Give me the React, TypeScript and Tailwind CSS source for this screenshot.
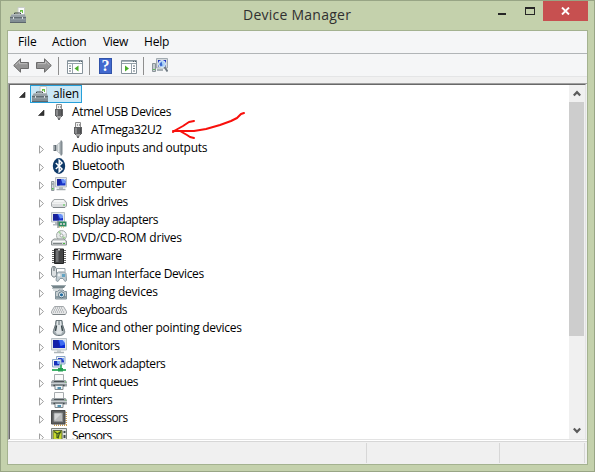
import type { ReactNode } from "react";

function Svg({ children, w = 16, h = 16 }: { children: ReactNode; w?: number; h?: number }) {
  return (
    <svg width={w} height={h} viewBox={`0 0 ${w} ${h}`} className="block shrink-0" fill="none">
      {children}
    </svg>
  );
}

const Toolbox = () => (
  <Svg>
    <path d="M8 7.500v-7h6.500v7z" fill="#fbfcfb" stroke="#c9cdca" />
    <path d="M10 5V3h3v3h-1V4.500h-1V5z" fill="#6abf45" />
    <path d="M4.500 7.500V6h6v1.500" stroke="#3d4448" />
    <path d="M2 7h12.500L16 10H0z" fill="#98a2a7" />
    <path d="M2 7.500h12" stroke="#b2babe" />
    <path d="M0 10h16v5.500H0z" fill="#828e94" />
    <path d="M0 10.500h16" stroke="#626d72" />
    <path d="M0 15.500h16" stroke="#5c666c" />
    <path d="M1 12h14v1H1z" fill="#909ba0" />
    <path d="M3 10h1v2H3zM12 10h1v2h-1z" fill="#d9dddf" />
  </Svg>
);

const Usb = () => (
  <Svg>
    <path d="M5.500.500h5V6h-5z" fill="#f1f1f1" stroke="#8e8e8e" />
    <path d="M7 2h1v2H7zM9 2h1v2H9z" fill="#a2a2a2" />
    <path d="M4 5h8v7h-1v1H5v-1H4z" fill="#5f6062" />
    <path d="M5 6h2v5.500H5z" fill="#8a8b8d" />
    <path d="M10 6h1v5h-1z" fill="#4b4c4e" />
    <path d="M6 12h4v2L9 15H7l-1-1z" fill="#a5a5a5" />
    <path d="M7 14h2v2H7z" fill="#6f7072" />
  </Svg>
);

const Speaker = () => (
  <Svg>
    <path d="M2.500 5h3v6h-3z" fill="#5f6970" />
    <path d="M3 5.500h1V10H3z" fill="#9ba4a9" />
    <path d="M5.500 5L10 1v14l-4.500-4z" fill="#b3babe" />
    <path d="M7.500 4v8" stroke="#e0e4e5" strokeWidth="1.500" />
    <path d="M9.500 .500H11v15H9.500z" fill="#848d93" />
    <path d="M11.500 1.500v13" stroke="#bdc3c6" />
  </Svg>
);

const Bluetooth = () => (
  <Svg>
    <ellipse cx="8" cy="8" rx="6.200" ry="7.900" fill="#0f3a69" />
    <path d="M4.800 5l6.200 6-2.800 2.700V2.300L11 5l-6.200 6" stroke="#fff" strokeWidth="1.500" />
  </Svg>
);

const Computer = () => (
  <Svg>
    <path d="M.500 5.500h2.500v9H.500z" fill="#d4d9dc" stroke="#929b9f" />
    <path d="M1 8h1.500" stroke="#78858b" />
    <path d="M1 12h1.500v1.500H1z" fill="#50c04b" />
    <path d="M4.500 1.500h11v9.500h-11z" fill="#e5e8e9" stroke="#b7bec2" />
    <path d="M6 3h8.500v6.500H6z" fill="#1834c8" />
    <path d="M6 3h4L8.500 9.500H6z" fill="#17219a" />
    <path d="M10 3h4.500v4l-3 .5z" fill="#6b92f5" />
    <path d="M12.500 3h2v2z" fill="#c3d9ff" />
    <path d="M8 11h4v2H8z" fill="#b7bec2" />
    <path d="M5.500 13.500h9" stroke="#a2aaae" strokeWidth="1.500" />
  </Svg>
);

const Disk = () => (
  <Svg>
    <path d="M3 5.500h10l2.500 3V12l-1.500 1.500H2L.500 12V8.500z" fill="#dadcdd" stroke="#a1a5a7" />
    <path d="M2 8.500L3.500 6h9L14 8.500z" fill="#f5f6f6" />
    <path d="M1 9.500h14" stroke="#f0f1f1" />
    <path d="M2 13.500h12" stroke="#83898b" />
    <path d="M12 10.500h2v1h-2z" fill="#49c346" />
  </Svg>
);

const Display = () => (
  <Svg>
    <path d="M.500.500h13v9.500H.500z" fill="#e5e8ea" stroke="#b7bfc3" />
    <path d="M2 2h10v6.500H2z" fill="#1834c8" />
    <path d="M2 2h4l2 6.500H2z" fill="#17219a" />
    <path d="M7 2h5v4l-3 .5z" fill="#6b92f5" />
    <path d="M10 2h2v2z" fill="#c3d9ff" />
    <path d="M4 10h4v2H4zM2 12h6v1.500H2z" fill="#b4bbc0" />
    <path d="M7.500 9.500h8v5h-8z" fill="#2e8b62" />
    <path d="M9 11h2v2H9zM12 11h2v2h-2z" fill="#bac7c0" />
    <path d="M7 9v7" stroke="#606e68" />
    <path d="M8 15h6" stroke="#bea746" strokeDasharray="1 1" />
  </Svg>
);

const Dvd = () => (
  <Svg>
    <circle cx="10.500" cy="5.500" r="5" fill="#e4e8e6" stroke="#a5adaa" />
    <path d="M10.500 5.500L7 2l2-1zM10.500 5.500l4 2-2 2z" fill="#a0d396" />
    <path d="M10.500 5.500l2-4 2 2z" fill="#f5f5ff" />
    <circle cx="10.500" cy="5.500" r="1.500" fill="#fff" stroke="#9ea7a3" />
    <path d="M3 9h10l2.500 2v4H.500v-4z" fill="#d5d8d9" stroke="#8c9293" />
    <path d="M2 11.500h12" stroke="#fafafa" />
    <path d="M2 13.500h9" stroke="#7d8485" />
    <path d="M12 13.500h2" stroke="#47ba3c" />
  </Svg>
);

const Chip = () => (
  <Svg>
    <path d="M1 2.500h14M1 4.500h14M1 6.500h14M1 8.500h14M1 10.500h14M1 12.500h14M1 14.500h14" stroke="#666" />
    <path d="M3.500 1h9v14.500h-9z" fill="#444546" stroke="#242526" />
    <path d="M5 2h2.500v12H5z" fill="#707274" />
    <path d="M7 1h2v1.500H7z" fill="#ccc" />
  </Svg>
);

const Hid = () => (
  <Svg>
    <path d="M1.500.500h2.500L5.500 3v6L4 11H2L.500 9V3z" fill="#dce0e2" stroke="#7d878c" />
    <path d="M3 1v4" stroke="#58646a" />
    <path d="M5 2.500h9v4" stroke="#9ba5aa" />
    <path d="M6 7l1.500-1h6L15 7.500l.5 7-1.500 1-2-3H9l-2 3-2-1z" fill="#c0cbd1" stroke="#8a989f" />
    <path d="M6.500 9h3M8 7.500v3" stroke="#fff" />
    <path d="M11 8h3v3h-3z" fill="#63a4c3" />
  </Svg>
);

const Camera = () => (
  <Svg>
    <path d="M0 1h15l-2 3H2z" fill="#74848a" />
    <path d="M0 1.500h14" stroke="#9eabb0" />
    <path d="M1 4.500h11M2 6h7" stroke="#b7c0c3" />
    <path d="M4.500 7.500h2L8 6h4l1.500 1.500h2V15h-11z" fill="#c7cfd2" stroke="#82929a" />
    <path d="M5 12h10v2.500H5z" fill="#8b9ba2" />
    <circle cx="10.500" cy="10.800" r="3" fill="#f1f5f7" stroke="#57707d" />
    <circle cx="10.500" cy="10.800" r="1.600" fill="#226b9f" />
  </Svg>
);

const Keyboard = () => (
  <Svg>
    <path d="M3.500 4.500h9l3 5v1.500L14 12.500H2L.500 11V9.500z" fill="#e5e6e7" stroke="#a2a7aa" />
    <path d="M4 6h8M3 8h10M2 10h12" stroke="#93999c" strokeDasharray="1 1" />
    <path d="M1.500 12.500h13" stroke="#7b8285" />
  </Svg>
);

const Mouse = () => (
  <Svg>
    <path d="M5 .500h6l.5 4 2 6c1 3-1.500 5-5.500 5s-6.500-2-5.500-5l2-6z" fill="#a3adb1" stroke="#69757a" />
    <path d="M6 1h4l.5 4 1.500 6-2 3H6l-2-3 1.500-6z" fill="#dfe4e6" />
    <path d="M5.500 5.500L4.500 11M10.500 5.500l1 5.500" stroke="#39454a" strokeWidth="1.400" />
    <path d="M8 1v4" stroke="#606e74" />
    <path d="M5.500 14h5" stroke="#d4dadd" />
  </Svg>
);

const Monitor = () => (
  <Svg>
    <path d="M.500.500h15v11.500H.500z" fill="#e3e7e9" stroke="#b9c1c5" />
    <path d="M2 2h12v8H2z" fill="#0a2ad6" />
    <path d="M2 2h5l2 8H2z" fill="#1420a8" />
    <path d="M8 2h6v4.500L9.500 8z" fill="#3e6bf0" />
    <path d="M11.500 2H14v3z" fill="#bdd4ff" />
    <path d="M6 12h4v2H6z" fill="#c8ced1" />
    <path d="M3 14.500h10" stroke="#acb4b8" strokeWidth="1.500" />
  </Svg>
);

const Network = () => (
  <Svg>
    <path d="M5.500.500h8.500v7.500H5.500z" fill="#eef2f4" stroke="#8ba6c8" />
    <path d="M7 2h6v4.500H7z" fill="#253bc5" />
    <path d="M10.500 2H13v3z" fill="#7da5f5" />
    <path d="M1.500 3.500H10V11H1.500z" fill="#eef2f4" stroke="#8ba6c8" />
    <path d="M3 5h5.500v4.500H3z" fill="#1530ba" />
    <path d="M6 5h2.500v3L6.500 8z" fill="#6fa7fa" />
    <path d="M10 8.500v4M1 14h14" stroke="#42b36b" strokeWidth="1.800" />
    <path d="M7 12h5v3.500H7z" fill="#259e52" />
  </Svg>
);

const Printer = () => (
  <Svg>
    <path d="M3.500.500h9v7h-9z" fill="#fafafa" stroke="#a7acaf" />
    <path d="M1.500 6h13L16 8v4.500H0V8z" fill="#9ba2a6" />
    <path d="M3 7.500h10" stroke="#4b5255" />
    <path d="M0 9.500h16" stroke="#ccd1d3" />
    <path d="M2.500 11.500h11" stroke="#333b3e" strokeWidth="1.500" />
    <path d="M4 11.500h8v4H4z" fill="#edf3f6" stroke="#81898d" />
    <path d="M6.500 13h3.500v2H6.500z" fill="#5292b0" />
    <path d="M14 8h1" stroke="#6fd36a" />
  </Svg>
);

const Processor = () => (
  <Svg>
    <path d="M3 15.200h13M15.200 2v13" stroke="#c99b4a" strokeWidth="1.500" strokeDasharray="1 1" />
    <path d="M.500.500h13.500V14H.500z" fill="#5c5e5f" stroke="#47494a" />
    <path d="M3 3h8.500v8.500H3z" fill="#b9bbbc" stroke="#8b8f90" />
    <path d="M3.500 3.500h7l-7 7z" fill="#d3d5d6" />
  </Svg>
);

const Sensor = () => (
  <Svg>
    <path d="M.500.500h15v15H.500z" fill="#dfe3e1" stroke="#7c837f" />
    <path d="M2 2.500h9v10H2z" fill="#c7d92e" stroke="#5e693c" />
    <path d="M6 10V6l4-2.500-2 3-1 4M3 3.500l3 2" stroke="#3e591f" strokeWidth="1.200" />
    <path d="M13.500 3v2M13.500 7v3" stroke="#3f4b4c" strokeWidth="2" />
  </Svg>
);

const NavArrow = ({ back }: { back?: boolean }) => (
  <svg width="16" height="15" viewBox="0 0 16 15" className={back ? "block" : "block -scale-x-100"}>
    <path d="M.7 7.500L7.500.800v3.700h8v6h-8v3.700z" fill="#949494" stroke="#6b6b6b" />
    <path d="M2.500 7.200l4-4v2.500H14" fill="none" stroke="#bebebe" />
  </svg>
);

const PanelIcon = ({ right }: { right?: boolean }) => (
  <Svg h={14}>
    <path d="M.500.500h15v13H.500z" fill="#fff" stroke="#86939b" />
    <path d="M1 1.500h14" stroke="#a9b6bd" />
    <path d="M12 1.500h1M14 1.500h1" stroke="#526069" />
    <path d="M1 3.500h14" stroke="#94a1a9" />
    <path d={right ? "M10.500 4v9" : "M5.500 4v9"} stroke="#96a3ab" />
    <path d={right ? "M12 6h2M12 8.500h2M12 11h2" : "M2 6h2M2 8.500h2M2 11h2"} stroke="#65747e" />
    <path d={right ? "M4 5.500L8 8.500 4 11.500z" : "M11.500 5.500l-4 3 4 3z"} fill="#4aae28" />
  </Svg>
);

const HelpIcon = () => (
  <div className="flex h-4 w-[13px] items-center justify-center border border-[#3153a9] bg-[#4269cf] font-['Liberation_Serif',serif] text-[16px] font-bold leading-4 text-white">?</div>
);

const ScanIcon = () => (
  <Svg>
    <path d="M.500 5.500h3v8h-3z" fill="#c4cbce" stroke="#8a9499" />
    <path d="M1 11.500h2" stroke="#5bbc54" />
    <path d="M4.500.500h11V10h-11z" fill="#d5dadd" stroke="#a2abb1" />
    <path d="M6 2h8v6.500H6z" fill="#1a2fc1" />
    <path d="M5 12h6" stroke="#a8b0b5" strokeWidth="2" />
    <circle cx="10" cy="6" r="3.500" fill="#a9d1f8" stroke="#e4edf3" />
    <path d="M7.500 6l2-2.500 1 4-2 1z" fill="#3a67d0" />
    <path d="M12.500 9l3 4.500" stroke="#6f7a83" strokeWidth="2" />
  </Svg>
);

const Expander = ({ open }: { open?: boolean }) => (
  <svg width="7" height="9" viewBox="0 0 7 9" className="block shrink-0" fill="none">
    {open ? <path d="M6 2v5.500H.500z" fill="#333" stroke="#262626" strokeWidth=".6" /> : <path d="M1.500 .8v7.400L5.500 4.500z" fill="#fff" stroke="#a0a0a0" />}
  </svg>
);

const rows: { label: string; icon: ReactNode; fit: string }[] = [
  { label: "Audio inputs and outputs", icon: <Speaker />, fit: "tracking-[-0.28px]" },
  { label: "Bluetooth", icon: <Bluetooth />, fit: "tracking-[-0.32px]" },
  { label: "Computer", icon: <Computer />, fit: "tracking-[-0.3px]" },
  { label: "Disk drives", icon: <Disk />, fit: "tracking-[-0.43px]" },
  { label: "Display adapters", icon: <Display />, fit: "tracking-[-0.45px]" },
  { label: "DVD/CD-ROM drives", icon: <Dvd />, fit: "tracking-[-0.22px]" },
  { label: "Firmware", icon: <Chip />, fit: "tracking-[-0.4px]" },
  { label: "Human Interface Devices", icon: <Hid />, fit: "tracking-[-0.36px]" },
  { label: "Imaging devices", icon: <Camera />, fit: "tracking-[-0.22px]" },
  { label: "Keyboards", icon: <Keyboard />, fit: "tracking-[-0.47px]" },
  { label: "Mice and other pointing devices", icon: <Mouse />, fit: "tracking-[-0.27px]" },
  { label: "Monitors", icon: <Monitor />, fit: "tracking-[-0.36px]" },
  { label: "Network adapters", icon: <Network />, fit: "tracking-[-0.45px]" },
  { label: "Print queues", icon: <Printer />, fit: "tracking-[-0.43px]" },
  { label: "Printers", icon: <Printer />, fit: "tracking-[-0.5px]" },
  { label: "Processors", icon: <Processor />, fit: "tracking-[-0.55px]" },
  { label: "Sensors", icon: <Sensor />, fit: "tracking-[-0.65px]" },
];

const Chevron = ({ down }: { down?: boolean }) => (
  <svg width="8" height="7" viewBox="0 0 8 7" className={down ? "block rotate-180" : "block"} fill="none">
    <path d="M.8 5.500L4 2.200l3.200 3.300" stroke="#5b5b5b" strokeWidth="2.200" />
  </svg>
);

export default function App() {
  return (
    <div className="flex h-[472px] w-[595px] flex-col overflow-hidden border border-[#98a585] bg-[#c4d1ac] px-1.5 pb-1.5 font-['Open_Sans','Noto_Sans',sans-serif] text-xs text-black">
      <header className="flex h-[29px] shrink-0 items-start">
        <div className="ml-[3px] mt-[6px] w-4"><Toolbox /></div>
        <h1 className="ml-[217px] mt-[4px] w-[130px] whitespace-nowrap text-[14px] leading-5 tracking-[0.25px] text-[#303030]">Device Manager</h1>
        <div className="ml-auto flex">
          <div className="mr-[19px] mt-3 h-0.5 w-2 bg-[#262626]" />
          <div className="mr-2 mt-[6px] h-2 w-2.5 border border-t-2 border-[#262626]" />
          <button className="flex h-5 w-[45px] items-center justify-center bg-[#c75050]">
            <svg width="9" height="8" viewBox="0 0 9 8"><path d="M1 .5l7 7M8 .5l-7 7" stroke="white" strokeWidth="1.900" /></svg>
          </button>
        </div>
      </header>
      <main className="flex min-h-0 flex-1 flex-col border border-[#a4b290] bg-[#f0f0f0]">
        <nav className="flex h-[23px] shrink-0 items-start border-b border-[#b1b5b7] bg-[#f5f6f7] pl-[10px] leading-[22px]">
          <span className="w-[34px] tracking-[-0.1px]">File</span>
          <span className="w-[51px] tracking-[-0.1px]">Action</span>
          <span className="w-[41px] tracking-[-0.3px]">View</span>
          <span className="tracking-[-0.2px]">Help</span>
        </nav>
        <div className="flex h-[23px] shrink-0 items-center border-b border-[#e4e5e6] bg-[#f5f6f7] pl-[5px] pt-px">
          <NavArrow back /><div className="w-[7px]" /><NavArrow />
          <div className="ml-[6px] h-[18px] w-px bg-[#8e8e8e]" />
          <div className="ml-2 mt-0.5"><PanelIcon /></div>
          <div className="ml-[6px] h-[18px] w-px bg-[#8e8e8e]" />
          <div className="ml-[9px]"><HelpIcon /></div>
          <div className="ml-[9px] mt-0.5"><PanelIcon right /></div>
          <div className="ml-[6px] h-[18px] w-px bg-[#8e8e8e]" />
          <div className="ml-2"><ScanIcon /></div>
        </div>
        <div className="h-[6px] shrink-0" />
        <section className="flex h-[357px] shrink-0 border-b border-l border-t border-b-[#e3e3e3] border-l-[#a0a0a0] border-t-[#a0a0a0] pr-px">
          <div className="flex min-w-0 flex-1 border-l border-r border-t border-l-[#696969] border-r-[#e3e3e3] border-t-[#696969] bg-white">
            <div className="relative min-w-0 flex-1 overflow-hidden">
              <div className="flex h-[18px] items-center pl-[9px]">
                <Expander open />
                <div className="ml-[4px] flex h-[18px] w-[52px] shrink-0 items-center border border-[#26a0da] bg-[#cbe8f6] pl-px">
                  <Toolbox /><span className="ml-[5px] leading-4 tracking-[-0.2px]">alien</span>
                </div>
              </div>
              <div className="flex h-[18px] items-center pl-[28px]">
                <Expander open /><div className="ml-[6px]"><Usb /></div><span className="ml-[5px] leading-4 tracking-[-0.33px]">Atmel USB Devices</span>
              </div>
              <div className="flex h-[18px] items-center pl-[60px]">
                <Usb /><span className="ml-[5px] leading-4 tracking-[-0.37px]">ATmega32U2</span>
              </div>
              {rows.map((r) => (
                <div key={r.label} className="flex h-[18px] items-center whitespace-nowrap pl-[28px]">
                  <div className="pt-0.5"><Expander /></div>
                  <div className="ml-[6px]">{r.icon}</div>
                  <span className={`ml-[5px] leading-4 ${r.fit}`}>{r.label}</span>
                </div>
              ))}
              <svg className="absolute left-[160px] top-[25px]" width="80" height="36" viewBox="170 110 80 36" fill="none" stroke="#f8100c" strokeWidth="2" strokeLinecap="round" strokeLinejoin="round">
                <path d="M244 113l-3 1-4 4-6 3-11 4-14 4-12 2H173M194 121l-5 1-6 4-9 5-1 1 3-2 4 1 7 4 3 2 4 1" />
              </svg>
            </div>
            <div className="flex w-4 shrink-0 flex-col items-center bg-[#f0f0f0]">
              <div className="flex h-[17px] items-center"><Chevron /></div>
              <div className="h-[234px] w-[15px] self-start bg-[#cdcdcd]" />
              <div className="mt-auto flex h-[17px] items-center"><Chevron down /></div>
            </div>
          </div>
        </section>
        <div className="h-px shrink-0 bg-white" />
        <footer className="flex min-h-0 flex-1 border-t border-[#d7d7d7] py-px">
          <div className="w-[359px] border-r border-[#d7d7d7]" />
          <div className="w-[133px] border-r border-[#d7d7d7]" />
          <div className="w-[85px] border-r border-[#d7d7d7]" />
        </footer>
      </main>
    </div>
  );
}
